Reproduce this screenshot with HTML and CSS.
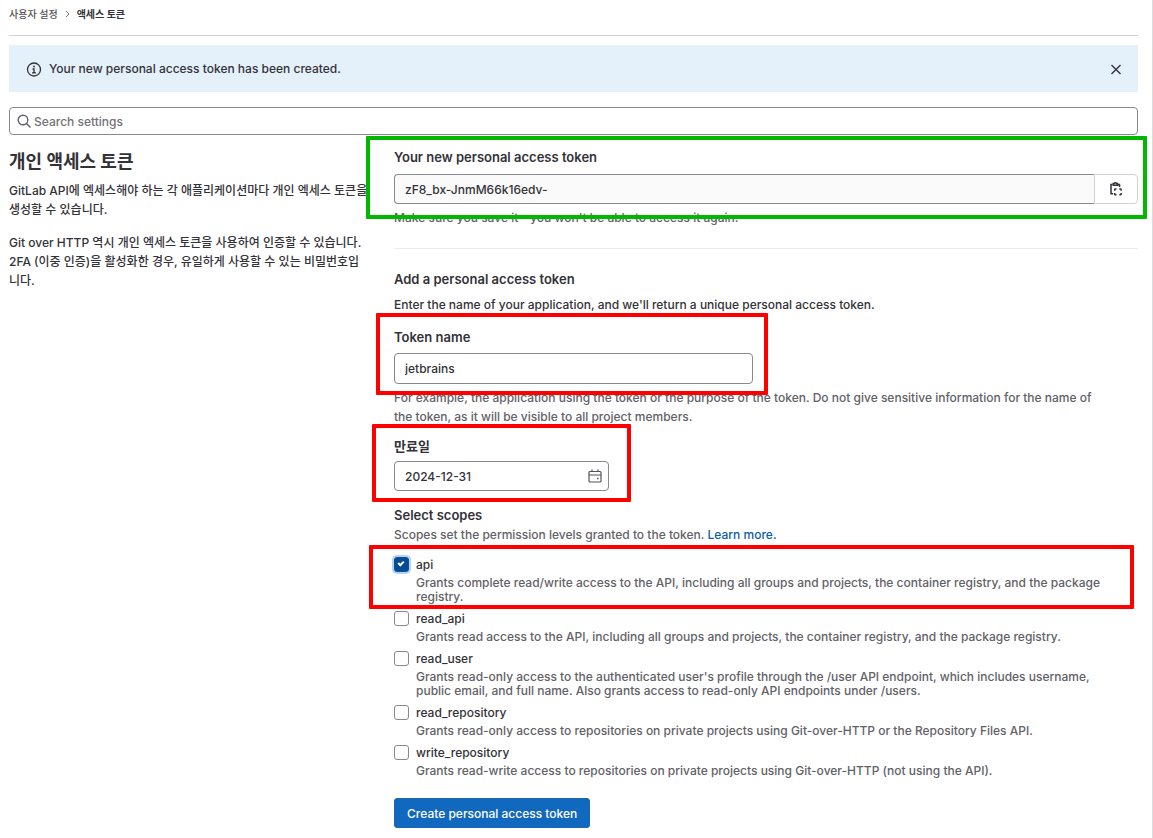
FILE: index.html
```html
<!DOCTYPE html>
<html lang="ko">
<head>
    <meta charset="UTF-8">
    <meta name="viewport" content="width=device-width, initial-scale=1.0">
    <title>액세스 토큰</title>
    <link rel="stylesheet" href="styles.css">
</head>
<body>
    <div class="page">
        <nav class="breadcrumbs">
            <a href="#">사용자 설정</a>
            <svg width="5" height="8" viewBox="0 0 5 8" fill="none" stroke="currentColor"><path d="M1 1l3 3-3 3"/></svg>
            <a href="#" class="current">액세스 토큰</a>
        </nav>

        <div class="alert">
            <svg width="16" height="16" viewBox="0 0 16 16" fill="none" stroke="currentColor" stroke-width="1.3">
                <circle cx="8" cy="8.500" r="6.500"/>
                <path d="M6.500 8H8v3.500M6 11.800h4"/>
                <circle cx="8" cy="5.500" r=".9" fill="currentColor" stroke="none"/>
            </svg>
            <p>Your new personal access token has been created.</p>
            <button type="button" class="close" aria-label="Dismiss">
                <svg width="12" height="12" viewBox="0 0 12 12" fill="none" stroke="currentColor" stroke-width="1.4"><path d="M1.500 2l9 9M10.500 2l-9 9"/></svg>
            </button>
        </div>

        <div class="search">
            <svg width="14" height="14" viewBox="0 0 14 14" fill="none" stroke="currentColor" stroke-width="1.4"><circle cx="6" cy="6" r="4.8"/><path d="M9.500 9.500l4 4"/></svg>
            <input type="search" placeholder="Search settings" aria-label="Search settings">
        </div>

        <div class="columns">
            <section class="intro">
                <h1>개인 액세스 토큰</h1>
                <p>GitLab API에 엑세스해야 하는 각 애플리케이션마다 개인 엑세스 토큰을 생성할 수 있습니다.</p>
                <p>Git over HTTP 역시 개인 엑세스 토큰을 사용하여 인증할 수 있습니다. 2FA (이중 인증)을 활성화한 경우, 유일하게 사용할 수 있는 비밀번호입니다.</p>
            </section>

            <section class="settings">
                <div class="created marked">
                    <label for="new-token">Your new personal access token</label>
                    <div class="input-group">
                        <input type="text" id="new-token" class="input" value="zF8_bx-JnmM66k16edv-" readonly>
                        <button type="button" class="copy" aria-label="Copy">
                            <svg width="14" height="16" viewBox="0 0 14 16" fill="none" stroke="currentColor" stroke-width="1.5">
                                <path d="M3.500 3.500H2v9.200h2.200M9 3.500h1.500V6"/>
                                <path d="M4.200 4.200V2.500h1a1.200 1.200 0 0 1 2.300 0h1v1.700z"/>
                                <path d="M5.700 9.700V8.500q0-.6.6-.6h1.200M10.300 7.900h1.200q.6 0 .6.6v1.200M12.100 12v1.200q0 .6-.6.6h-1.200M7.500 13.800H6.300q-.6 0-.6-.6V12"/>
                            </svg>
                        </button>
                    </div>
                    <p class="help">Make sure you save it - you won't be able to access it again.</p>
                    <span class="mark mark-created"></span>
                </div>

                <hr>

                <form>
                    <h2>Add a personal access token</h2>
                    <p class="lead">Enter the name of your application, and we'll return a unique personal access token.</p>

                    <div class="group first marked">
                        <label for="token-name">Token name</label>
                        <input type="text" id="token-name" class="input name" value="jetbrains">
                        <p class="help">For example, the application using the token or the purpose of the token. Do not give sensitive information for the name of the token, as it will be visible to all project members.</p>
                        <span class="mark mark-name"></span>
                    </div>

                    <div class="group marked">
                        <label for="expires">만료일</label>
                        <div class="date">
                            <input type="text" id="expires" class="input" value="2024-12-31">
                            <svg width="14" height="14" viewBox="0 0 14 14" fill="none" stroke="currentColor" stroke-width="1.2">
                                <rect x="1" y="2.500" width="12" height="10.500" rx="1"/>
                                <path d="M1 6h12M4 .5v2M10 .5v2"/>
                                <path d="M9 9.500h1.500" stroke-width="1.500"/>
                            </svg>
                        </div>
                        <span class="mark mark-date"></span>
                    </div>

                    <fieldset class="group">
                        <legend>Select scopes</legend>
                        <p class="help">Scopes set the permission levels granted to the token. <a href="#">Learn more.</a></p>

                        <div class="scopes">
                            <div class="scope marked">
                                <input type="checkbox" id="api" checked>
                                <label for="api">api</label>
                                <p>Grants complete read/write access to the API, including all groups and projects, the container registry, and the package registry.</p>
                                <span class="mark mark-scope"></span>
                            </div>
                            <div class="scope">
                                <input type="checkbox" id="read_api">
                                <label for="read_api">read_api</label>
                                <p>Grants read access to the API, including all groups and projects, the container registry, and the package registry.</p>
                            </div>
                            <div class="scope">
                                <input type="checkbox" id="read_user">
                                <label for="read_user">read_user</label>
                                <p>Grants read-only access to the authenticated user's profile through the /user API endpoint, which includes username, public email, and full name. Also grants access to read-only API endpoints under /users.</p>
                            </div>
                            <div class="scope">
                                <input type="checkbox" id="read_repository">
                                <label for="read_repository">read_repository</label>
                                <p>Grants read-only access to repositories on private projects using Git-over-HTTP or the Repository Files API.</p>
                            </div>
                            <div class="scope">
                                <input type="checkbox" id="write_repository">
                                <label for="write_repository">write_repository</label>
                                <p>Grants read-write access to repositories on private projects using Git-over-HTTP (not using the API).</p>
                            </div>
                        </div>
                    </fieldset>

                    <button type="submit" class="submit">Create personal access token</button>
                </form>
            </section>
        </div>
    </div>
</body>
</html>
```
FILE: styles.css
```css
* {
    box-sizing: border-box;
}

body {
    margin: 0;
    background: #fff;
    color: #333238;
    font-family: Inter, "Noto Sans CJK KR", sans-serif;
    font-size: 12px;
    font-weight: 500;
    line-height: 19px;
}

h1, h2, p {
    margin: 0;
}

input, button {
    font: inherit;
    color: inherit;
}

.page {
    min-height: 100vh;
    padding: 0 14px 11px 9px;
    border-right: 1px solid #dcdcde;
}

.breadcrumbs {
    display: flex;
    align-items: center;
    gap: 7px;
    height: 36px;
    padding-bottom: 7px;
    border-bottom: 1px solid #d2d2d6;
    color: #737278;
    font-size: 10px;
}

.breadcrumbs a {
    color: #535158;
    text-decoration: none;
}

.breadcrumbs .current {
    color: #333238;
    font-weight: bold;
}

.alert {
    display: flex;
    align-items: center;
    gap: 7px;
    margin-top: 9px;
    padding: 14px 16px 14px 17px;
    background: #e4f0fa;
}

.alert p {
    flex: 1;
}

.close {
    display: flex;
    padding: 0;
    border: 0;
    background: none;
}

.search {
    display: flex;
    align-items: center;
    gap: 3px;
    height: 28px;
    margin-top: 15px;
    padding: 0 7px;
    border: 1px solid #89888d;
    border-radius: 4px;
    color: #626168;
}

.search input {
    flex: 1;
    padding: 0;
    border: 0;
    outline: 0;
    background: none;
}

.search input::placeholder {
    color: #737278;
}

.columns {
    display: grid;
    grid-template-columns: 360fr 744fr;
    gap: 25px;
    margin-top: 13px;
}

.intro {
    word-break: break-all;
}

.intro h1 {
    margin-bottom: 6px;
    font-size: 18px;
    line-height: 27px;
}

.intro p {
    margin-bottom: 14px;
}

label, legend, h2 {
    display: block;
    padding: 0;
    font-size: 13px;
    font-weight: 600;
}

.input {
    display: block;
    width: 100%;
    height: 30px;
    padding: 0 10px;
    border: 1px solid #89888d;
    border-radius: 4px;
    background: #fff;
}

.input-group {
    display: flex;
    margin-top: 7px;
}

.input-group .input {
    flex: 1;
    border-right: 0;
    border-radius: 4px 0 0 4px;
    background: #fafafa;
}

.copy {
    display: flex;
    align-items: center;
    justify-content: center;
    width: 44px;
    border: 1px solid #d2d2d6;
    border-radius: 0 4px 4px 0;
    background: #fff;
}

.help {
    padding-right: 32px;
    color: #626168;
}

.created .help, .name + .help {
    margin-top: 4px;
}

hr {
    margin: 21px 0;
    border: 0;
    border-top: 1px solid #ececef;
}

.lead {
    margin-top: 6px;
}

.group {
    margin: 11px 0 0;
    padding: 0;
    border: 0;
}

.first {
    margin-top: 14px;
}

fieldset.group {
    margin-top: 15px;
}

.group .input {
    margin-top: 5px;
}

.group .name {
    max-width: 359px;
    height: 31px;
    margin-top: 6px;
}

.date {
    display: flex;
    align-items: center;
    width: 215px;
    color: #535158;
}

.date .input {
    color: #333238;
}

.date svg {
    flex: none;
    margin: 5px 0 0 -21px;
}

.help a {
    color: #0b5cad;
    text-decoration: none;
}

.scopes {
    margin-top: 10px;
}

.scope {
    margin-bottom: 4px;
    padding-left: 22px;
}

.scope input {
    float: left;
    appearance: none;
    width: 15px;
    height: 15px;
    margin: 3px 0 0 -22px;
    border: 1px solid #89888d;
    border-radius: 3px;
    background: #fff;
}

.scope input:checked {
    border-color: #0b5394;
    background: #064c94;
    box-shadow: 0 0 0 2px #b3d3f6;
}

.scope input:checked::after {
    content: "";
    display: block;
    width: 4px;
    height: 2px;
    margin: 3px 0 0 3px;
    border: solid #fff;
    border-width: 0 0 2px 2px;
    transform: rotate(-45deg);
}

.scope label {
    font-size: 12px;
    font-weight: 500;
    line-height: 22px;
}

.scope p {
    padding-right: 16px;
    color: #626168;
    line-height: 14px;
}

.submit {
    height: 30px;
    margin-top: 16px;
    padding: 0 12px;
    border: 1px solid #1f65b4;
    border-radius: 3px;
    background: #1068bf;
    color: #fff;
}

/* Highlight frames drawn over the form */
.marked {
    position: relative;
}

.mark {
    position: absolute;
    border: 4px solid #f00;
    border-radius: 1px;
    pointer-events: none;
}

.mark-created {
    inset: -12px -9px 8px -28px;
    border-color: #00b800;
}

.mark-name {
    top: -15px;
    left: -18px;
    width: 392px;
    height: 82px;
}

.mark-date {
    inset: -13px auto -11px -22px;
    width: 259px;
}

.mark-scope {
    inset: -9px 4px -5px -25px;
}
```
